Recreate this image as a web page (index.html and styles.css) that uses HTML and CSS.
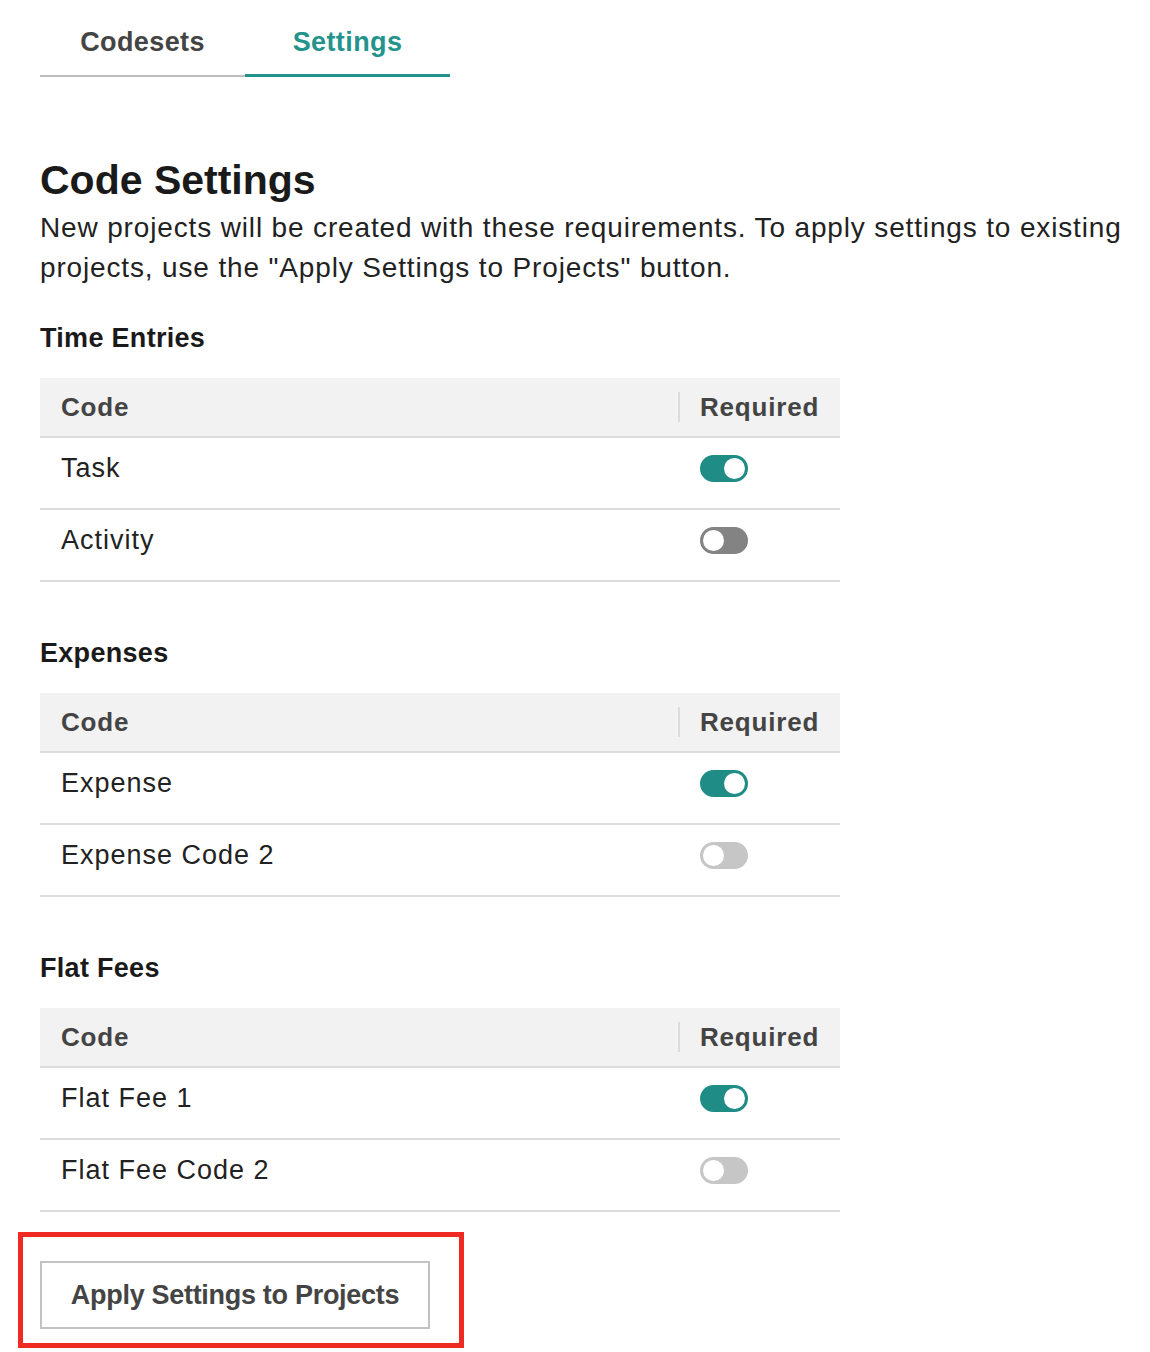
FILE: index.html
```html
<!DOCTYPE html>
<html>
<head>
<meta charset="UTF-8">
<title>Code Settings</title>
<link rel="stylesheet" href="styles.css">
</head>
<body>
<div class="tabs">
    <div class="tab">Codesets</div>
    <div class="tab active">Settings</div>
</div>
<div class="main">
    <h1>Code Settings</h1>
    <p class="intro">New projects will be created with these requirements. To apply settings to existing projects, use the "Apply Settings to Projects" button.</p>

    <h2>Time Entries</h2>
    <div class="codeTable">
        <div class="row head"><div class="code">Code</div><div class="req">Required</div></div>
        <div class="row"><div class="code">Task</div><div class="req"><span class="toggle on"></span></div></div>
        <div class="row"><div class="code">Activity</div><div class="req"><span class="toggle off dark"></span></div></div>
    </div>

    <h2>Expenses</h2>
    <div class="codeTable">
        <div class="row head"><div class="code">Code</div><div class="req">Required</div></div>
        <div class="row"><div class="code">Expense</div><div class="req"><span class="toggle on"></span></div></div>
        <div class="row"><div class="code">Expense Code 2</div><div class="req"><span class="toggle off"></span></div></div>
    </div>

    <h2>Flat Fees</h2>
    <div class="codeTable">
        <div class="row head"><div class="code">Code</div><div class="req">Required</div></div>
        <div class="row"><div class="code">Flat Fee 1</div><div class="req"><span class="toggle on"></span></div></div>
        <div class="row"><div class="code">Flat Fee Code 2</div><div class="req"><span class="toggle off"></span></div></div>
    </div>

    <div class="highlight">
        <button class="applyBtn">Apply Settings to Projects</button>
    </div>
</div>
</body>
</html>
```

FILE: styles.css
```css
html, body {
    margin: 0;
    background: #fff;
    font-family: "Liberation Sans", Arial, sans-serif;
    color: #222;
}
.tabs {
    display: flex;
    padding-left: 40px;
}
.tab {
    width: 205px;
    height: 77px;
    box-sizing: border-box;
    padding-top: 24px;
    line-height: 36px;
    text-align: center;
    font-size: 27px;
    font-weight: bold;
    letter-spacing: 0.4px;
    color: #444;
    border-bottom: 2px solid #bdbdbd;
}
.tab.active {
    color: #23938c;
    border-bottom: 3px solid #23938c;
}
.main {
    padding: 0 20px 0 40px;
}
h1 {
    margin: 79px 0 0;
    font-size: 41px;
    line-height: 48px;
    color: #1a1a1a;
}
.intro {
    margin: 4px 0 0;
    font-size: 28px;
    line-height: 40px;
    letter-spacing: 0.85px;
    color: #222;
}
h2 {
    margin: 30px 0 20px;
    font-size: 27px;
    line-height: 40px;
    letter-spacing: 0.3px;
    color: #1a1a1a;
}
.codeTable + h2 {
    margin-top: 51px;
}
.codeTable {
    width: 800px;
}
.row {
    display: flex;
    align-items: center;
    height: 72px;
    box-sizing: border-box;
    padding-bottom: 10px;
    border-bottom: 2px solid #dcdcdc;
    font-size: 27px;
    letter-spacing: 1px;
}
.row.head {
    height: 60px;
    padding-bottom: 0;
    background: #f2f2f2;
    font-weight: bold;
    color: #444;
    font-size: 26px;
    letter-spacing: 0.8px;
}
.code {
    flex: 1;
    padding-left: 21px;
}
.req {
    width: 162px;
    box-sizing: border-box;
    padding-left: 22px;
    display: flex;
    align-items: center;
}
.row.head .req {
    padding-left: 20px;
    border-left: 2px solid #dcdcdc;
    height: 30px;
    line-height: 30px;
}
.toggle {
    display: inline-block;
    width: 48px;
    height: 27px;
    border-radius: 14px;
    box-sizing: border-box;
    padding: 3px;
    background: #1f8d86;
}
.toggle::after {
    content: "";
    display: block;
    width: 21px;
    height: 21px;
    border-radius: 50%;
    background: #fff;
}
.toggle.on::after {
    margin-left: 21px;
}
.toggle.off {
    background: #c6c6c6;
}
.toggle.off.dark {
    background: #838383;
}
.highlight {
    display: inline-block;
    margin: 20px 0 0 -22px;
    padding: 24px 29px 14px 17px;
    border: 5px solid #ee2a22;
}
.applyBtn {
    display: block;
    width: 390px;
    height: 68px;
    background: #fff;
    border: 2px solid #c2c2c2;
    font-family: "Liberation Sans", Arial, sans-serif;
    font-size: 27px;
    font-weight: bold;
    color: #444;
    letter-spacing: -0.3px;
}
```
